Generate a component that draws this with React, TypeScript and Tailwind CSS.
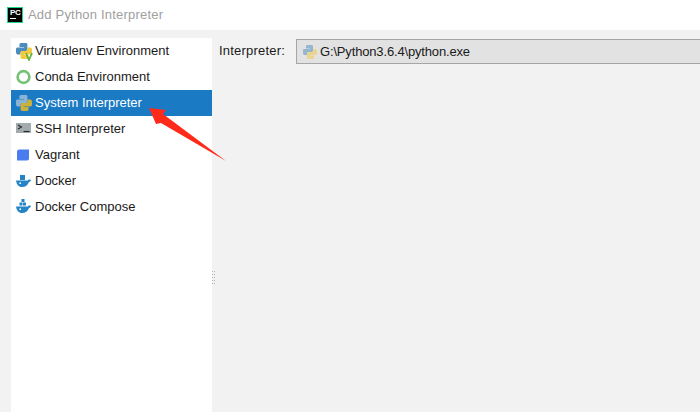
const pythonHalf = "M5.5 1H9.5C10.6 1 11 1.6 11 2.5V6.5C11 7.4 10.4 8 9.5 8H6.5C5.4 8 5 8.6 5 9.5V11H2.5C1.4 11 1 10 1 8.5V6.5C1 5.4 1.6 5 2.5 5H8V4.5H4V2.5C4 1.5 4.6 1 5.5 1Z";

const Python = ({ size = 16, faded = false, blue = "#4b8bbe", yellow = "#f4c93c" }: { size?: number; faded?: boolean; blue?: string; yellow?: string }) => (
  <svg width={size} height={size} viewBox="1 1 14 14" className={faded ? "opacity-50" : ""}>
    <path d={pythonHalf} fill={blue} />
    <path d={pythonHalf} fill={yellow} transform="rotate(180 8 8)" />
  </svg>
);

const Virtualenv = () => (
  <div className="relative">
    <Python />
    <svg width="8" height="9" viewBox="0 0 8 9" className="absolute -right-[1px] -bottom-[2px]">
      <path d="M1 1L4 8L7 1" fill="none" stroke="#62b543" strokeWidth="1.8" />
    </svg>
  </div>
);

const Conda = () => (
  <svg width="16" height="16" viewBox="0 0 16 16">
    <circle cx="7.5" cy="8" r="5.9" fill="none" stroke="#74c374" strokeWidth="2.6" />
  </svg>
);

const Ssh = () => (
  <svg width="16" height="16" viewBox="0 0 16 16">
    <rect x="0" y="2" width="15" height="10" fill="#a3abae" />
    <path d="M2 4L5.5 6L2 8" fill="none" stroke="#26292b" strokeWidth="1.1" />
    <path d="M7.5 10.5H13.5" stroke="#26292b" strokeWidth="1.1" />
  </svg>
);

const Vagrant = () => (
  <svg width="16" height="16" viewBox="0 0 16 16">
    <path d="M3.5 2.5H13V11.5C13 12.6 12.2 13.5 11 13.5H1V4.7C1 3.4 2.2 2.5 3.5 2.5Z" fill="#4a7cf0" />
  </svg>
);

const Docker = ({ compose = false }: { compose?: boolean }) => (
  <svg width="16" height="16" viewBox="0 0 16 16">
    {compose ? (
      <>
        <rect x="5.5" y="0" width="3" height="3" fill="#2484c6" />
        <rect x="3.5" y="3.5" width="3" height="3" fill="#2484c6" />
        <rect x="7" y="3.5" width="3" height="3" fill="#2484c6" />
      </>
    ) : (
      <rect x="4" y="2" width="5" height="5" fill="#2484c6" />
    )}
    <path d="M0 7.4H11.8C12.2 6.4 13.4 6.2 15 7C14.6 8.3 13.8 8.9 13 9C11.9 12 9.4 14 6.2 14C2.6 14 0.6 11.2 0 7.4Z" fill="#2484c6" />
    <circle cx="4.2" cy="10.2" r="0.9" fill="#ffffff" />
  </svg>
);

const items = [
  { label: "Virtualenv Environment", icon: <Virtualenv /> },
  { label: "Conda Environment", icon: <Conda /> },
  { label: "System Interpreter", icon: <Python blue="#8ab4d6" yellow="#c9b13c" />, selected: true },
  { label: "SSH Interpreter", icon: <Ssh /> },
  { label: "Vagrant", icon: <Vagrant /> },
  { label: "Docker", icon: <Docker /> },
  { label: "Docker Compose", icon: <Docker compose /> },
];

export default function App() {
  return (
    <div className="relative flex h-[412px] w-[700px] flex-col overflow-hidden bg-[#f2f2f2] text-[13px] text-[#1a1a1a] font-['Liberation_Sans','Noto_Sans',sans-serif]">
      <div className="flex h-[30px] shrink-0 items-center gap-[5px] bg-white pl-[7px]">
        <div className="flex h-[16px] w-[16px] flex-col border border-[#21d789] bg-black px-[2px] pt-[1px]">
          <span className="text-[8px] leading-[8px] font-bold tracking-[-0.3px] text-white">PC</span>
          <span className="mt-[1px] h-[1px] w-[6px] bg-white" />
        </div>
        <span className="text-[13px] tracking-[0.2px] text-[#a0a0a0]">Add Python Interpreter</span>
      </div>
      <div className="flex min-h-0 flex-1 pt-[8px] pl-[11px]">
        <div className="w-[201px] shrink-0 bg-white">
          {items.map((item) => (
            <div
              key={item.label}
              className={`flex h-[26px] items-center gap-[3px] pl-[5px] ${item.selected ? "bg-[#1a7ac4] text-white" : ""}`}
            >
              {item.icon}
              <span>{item.label}</span>
            </div>
          ))}
        </div>
        <div className="relative flex-1">
          <div className="absolute top-[233px] left-0 grid grid-cols-2 gap-x-[1px] gap-y-[2px]">
            {Array.from({ length: 10 }).map((_, i) => (
              <span key={i} className="h-[1px] w-[1px] bg-[#b5b5b5]" />
            ))}
          </div>
          <div className="flex h-[26px] items-center pl-[7px]">
            <span className="w-[77px] tracking-[0.2px]">Interpreter:</span>
            <div className="flex h-[25px] flex-1 items-center gap-[3px] self-end border border-r-0 border-[#a6a6a6] bg-[#e2e2e2] pl-[6px] tracking-[-0.16px]">
              <Python size={14} faded />
              <span>G:\Python3.6.4\python.exe</span>
            </div>
          </div>
        </div>
      </div>
      <svg width="700" height="412" viewBox="0 0 700 412" className="pointer-events-none absolute top-0 left-0">
        <path d="M149 108L166 110L163 114L226 161L161 123L156 124Z" fill="#ff2a1a" />
      </svg>
    </div>
  );
}
